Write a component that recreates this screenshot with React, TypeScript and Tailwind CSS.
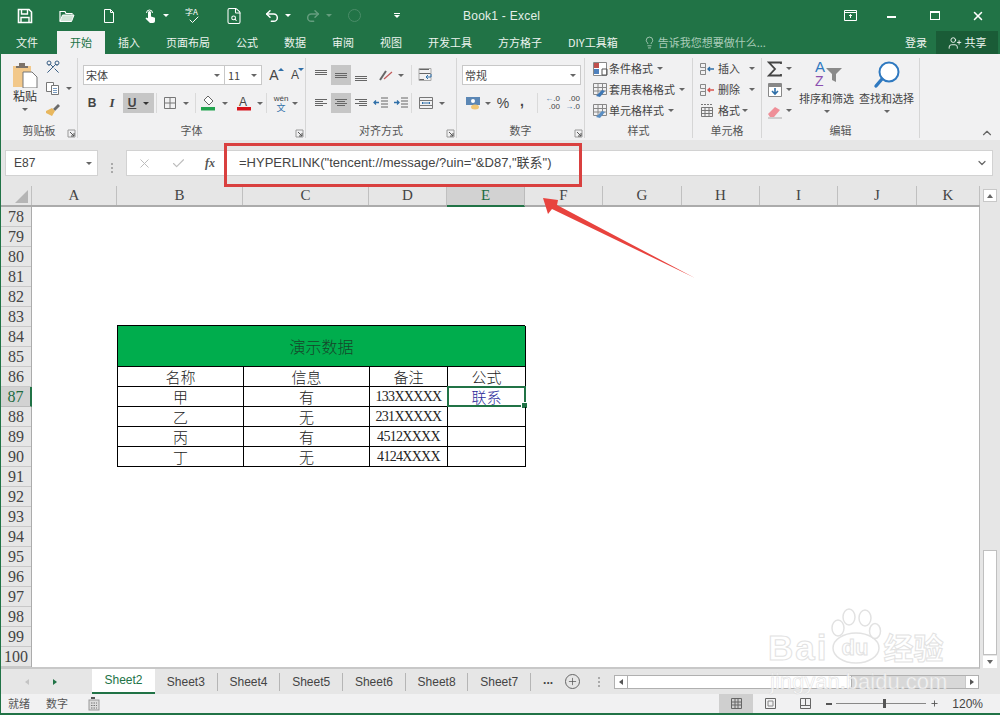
import React from "react";
import { Scissors, FileSearch, Undo2, Redo2, Lightbulb, UserPlus, ChevronDown, ChevronUp, X, Check, Plus } from "lucide-react";

const UI = "font-['Liberation_Sans','Noto_Sans_CJK_SC',sans-serif]";
const CJK = "font-['Noto_Sans_CJK_SC','Liberation_Sans',sans-serif]";

const S = ({ w = 16, h = 16, children }: { w?: number; h?: number; children: React.ReactNode }) => (
  <svg width={w} height={h} viewBox={`0 0 ${w} ${h}`} className="block shrink-0" fill="none">
    {children}
  </svg>
);

const Caret = ({ dark, white }: { dark?: boolean; white?: boolean }) => (
  <span className={"block w-0 h-0 border-x-[3px] border-x-transparent border-t-[3px] shrink-0 " + (white ? "border-t-white" : dark ? "border-t-[#333]" : "border-t-[#666]")} />
);

const Lines = ({ rows, c = "#666" }: { rows: number[][]; c?: string }) => (
  <S>
    {rows.map((r, i) => (
      <line key={i} x1={r[0]} x2={r[1]} y1={r[2] + 0.5} y2={r[2] + 0.5} stroke={c} />
    ))}
  </S>
);

const Launcher = () => (
  <span className="absolute right-[1px] top-[6px]">
    <S w={9} h={9}>
      <path d="M1 8V1h7v7z" stroke="#999" />
      <path d="M3 3l4 4M7 4v3H4" stroke="#555" />
    </S>
  </span>
);

const Group = ({ w, label, launcher, children }: { w: string; label?: string; launcher?: boolean; children: React.ReactNode }) => (
  <div className={"flex flex-col shrink-0 mt-[4px] mb-[2px] border-r border-[#d6d6d6] " + w}>
    <div className="flex-1 min-h-0">{children}</div>
    <div className="relative h-[15px] flex items-center justify-center text-[11px] leading-none text-[#555]">
      {label}
      {launcher && <Launcher />}
    </div>
  </div>
);

const Cell = ({ w, on, children }: { w: string; on?: boolean; children: React.ReactNode }) => (
  <div className={"h-[20px] flex items-center justify-center gap-[4px] shrink-0 " + w + (on ? " bg-[#c6c6c6]" : "")}>{children}</div>
);

const Sep = () => <span className="block w-px h-[20px] bg-[#dadada] shrink-0" />;

const StyleRow = ({ icon, text }: { icon: React.ReactNode; text: string }) => (
  <div className="h-[21px] flex items-center text-[11px] text-[#444] whitespace-nowrap">
    <span className="w-[16px] mr-[1px] flex justify-center shrink-0">{icon}</span>
    {text}
    <span className="ml-[4px]"><Caret /></span>
  </div>
);

const GridIcon = ({ accent }: { accent: string }) => (
  <S>
    <path d="M1.5 1.5h13v11h-13zM1.5 5.5h13M1.5 9h13M6 1.5v11M10.5 1.5v11" stroke="#888" />
    <path d="M4 14l6-6 3 1-5 6z" fill={accent} />
  </S>
);

function Ribbon() {
  return (
    <div className="h-[86px] flex bg-[#f1f1f2] text-[#444]">
      {/* clipboard */}
      <Group w="w-[77px]" label="剪贴板" launcher>
        <div className="flex h-[64px]">
          <div className="w-[37px] pl-[11px] pt-[4px] flex flex-col items-center shrink-0">
            <S w={27} h={26}>
              <path d="M1 4h18v21H1z" fill="#f2c88a" />
              <path d="M7 1h6v3h3v2H4V4h3z" fill="#7c7268" />
              <path d="M11 10h9l5 5v11H11z" fill="#fff" stroke="#777" />
            </S>
            <span className="text-[12px] leading-[14px] mt-[1px] text-[#333] whitespace-nowrap">粘贴</span>
            <span className="mt-[5px]"><Caret /></span>
          </div>
          <div className="pl-[7px] flex flex-col pt-[1px] gap-[5px]">
            <Scissors size={16} strokeWidth={1.5} color="#3a5f85" className="-scale-x-100 -rotate-90" />
            <div className="flex items-center gap-[5px]">
              <S>
                <path d="M1.5 2.5h7v9h-7z" fill="#fff" stroke="#777" />
                <path d="M6.5 5.5h7v9h-7z" fill="#fff" stroke="#777" />
                <path d="M8 8.5h4M8 10.5h4M8 12.5h4" stroke="#7a9cc0" />
              </S>
              <Caret />
            </div>
            <S>
              <path d="M8 8l5-5 2 2-5 5z" fill="#6b6b6b" />
              <path d="M1 10l6-3 3 3-3 5-6-3z" fill="#e8b75e" />
            </S>
          </div>
        </div>
      </Group>

      {/* font */}
      <Group w="w-[228px]" label="字体" launcher>
        <div className="pt-[7px] pl-[5px] flex h-[27px]">
          <div className="w-[142px] h-[20px] bg-white border border-[#c8c8c8] flex items-center justify-between pl-[2px] pr-[4px] text-[11px] text-[#444]">
            宋体 <Caret />
          </div>
          <div className="w-[37px] h-[20px] bg-white border border-l-0 border-[#c8c8c8] flex items-center justify-between pl-[3px] pr-[4px] text-[11px] text-[#444]">
            11 <Caret />
          </div>
          <div className="w-[22px] h-[20px] flex items-center justify-center relative ml-[1px] text-[14px] font-['Liberation_Sans',sans-serif]">
            A<span className="absolute right-[1px] top-[3px] w-0 h-0 border-x-[3px] border-x-transparent border-b-[3px] border-b-[#2f6fa8]" />
          </div>
          <div className="w-[20px] h-[20px] flex items-center justify-center relative text-[12px] font-['Liberation_Sans',sans-serif]">
            A<span className="absolute right-[1px] top-[3px] w-0 h-0 border-x-[3px] border-x-transparent border-t-[3px] border-t-[#2f6fa8]" />
          </div>
        </div>
        <div className="mt-[1px] pt-[7px] pl-[5px] flex items-center">
          <Cell w="w-[18px]"><b className="text-[12px] font-['Liberation_Sans',sans-serif]">B</b></Cell>
          <Cell w="w-[22px]"><i className="text-[13px] font-['Liberation_Serif',serif] font-bold">I</i></Cell>
          <Cell w="w-[31px] gap-[7px]" on><u className="text-[12px] font-bold font-['Liberation_Sans',sans-serif]">U</u><Caret dark /></Cell>
          <div className="w-[3px]" />
          <Sep />
          <Cell w="w-[38px] gap-[6px]">
            <S w={14} h={14}><path d="M1.5 1.5h11v11h-11zM7 1.5v11M1.5 7h11" stroke="#777" /></S>
            <Caret />
          </Cell>
          <Sep />
          <Cell w="w-[37px] gap-[6px]">
            <S>
              <path d="M8 1l5 5-4 4-5-5z" fill="#fff" stroke="#666" />
              <rect x="1" y="12" width="14" height="3.5" fill="#22a34f" />
            </S>
            <Caret />
          </Cell>
          <Cell w="w-[33px] gap-[5px]">
            <S>
              <text x="3" y="11" fontSize="12" fontFamily="Liberation Sans" fill="#444">A</text>
              <rect x="1" y="12" width="14" height="3.5" fill="#d8141c" />
            </S>
            <Caret />
          </Cell>
          <div className="w-[1px]" />
          <Sep />
          <Cell w="w-[38px] gap-[3px]">
            <div className="flex flex-col items-center leading-none">
              <span className="text-[8px] leading-[8px] font-['Liberation_Sans',sans-serif]">wén</span>
              <span className="text-[9px] leading-[9px] text-[#2f6fa8]">文</span>
            </div>
            <Caret />
          </Cell>
        </div>
      </Group>

      {/* align */}
      <Group w="w-[151px]" label="对齐方式" launcher>
        <div className="pt-[7px] pl-[4px] flex h-[27px]">
          <Cell w="w-[21px]"><Lines rows={[[2, 14, 3], [2, 14, 5], [2, 14, 7]]} /></Cell>
          <Cell w="w-[20px]" on><Lines rows={[[2, 14, 6], [2, 14, 8], [2, 14, 10]]} /></Cell>
          <Cell w="w-[20px]"><Lines rows={[[2, 14, 9], [2, 14, 11], [2, 14, 13]]} /></Cell>
          <Cell w="w-[40px] gap-[3px]">
            <S>
              <path d="M2 13L8 4" stroke="#666" strokeWidth="2" />
              <path d="M6 12L14 5" stroke="#c05a5a" strokeWidth="1.2" />
            </S>
            <Caret />
          </Cell>
          <Sep />
          <Cell w="w-[26px]">
            <S>
              <path d="M2 2.5h10M2 6.5h12M2 12.5h5" stroke="#666" />
              <path d="M2 1.5h12v12H2z" stroke="#aaa" />
              <path d="M14 7v3H9m2-2l-2 2 2 2" stroke="#2f6fa8" />
            </S>
          </Cell>
        </div>
        <div className="mt-[1px] pt-[7px] pl-[4px] flex">
          <Cell w="w-[21px]"><Lines rows={[[2, 14, 4], [2, 10, 6], [2, 14, 8], [2, 10, 10]]} /></Cell>
          <Cell w="w-[20px]" on><Lines rows={[[2, 14, 4], [4, 12, 6], [2, 14, 8], [4, 12, 10]]} /></Cell>
          <Cell w="w-[20px]"><Lines rows={[[2, 14, 4], [6, 14, 6], [2, 14, 8], [6, 14, 10]]} /></Cell>
          <Cell w="w-[20px]">
            <S>
              <path d="M8 3h7M8 6h7M8 9h7M8 12h7" stroke="#666" />
              <path d="M6 7.5H1m2-2l-2 2 2 2" stroke="#2f6fa8" strokeWidth="1.3" />
            </S>
          </Cell>
          <Cell w="w-[20px]">
            <S>
              <path d="M8 3h7M8 6h7M8 9h7M8 12h7" stroke="#666" />
              <path d="M1 7.5h5m-2-2l2 2-2 2" stroke="#2f6fa8" strokeWidth="1.3" />
            </S>
          </Cell>
          <Sep />
          <Cell w="w-[38px] gap-[5px]">
            <S>
              <path d="M1.5 2.5h13v11h-13zM1.5 5.5h13M1.5 10.5h13" stroke="#777" />
              <path d="M4 8h8M5 7l-1 1 1 1M11 7l1 1-1 1" stroke="#2f6fa8" />
            </S>
            <Caret />
          </Cell>
        </div>
      </Group>

      {/* number */}
      <Group w="w-[128px]" label="数字" launcher>
        <div className="pt-[7px] pl-[5px] h-[27px]">
          <div className="w-[119px] h-[20px] bg-white border border-[#c8c8c8] flex items-center justify-between pl-[2px] pr-[4px] text-[11px] text-[#444]">
            常规 <Caret />
          </div>
        </div>
        <div className="mt-[1px] pt-[7px] pl-[6px] flex items-center">
          <Cell w="w-[30px] gap-[4px]">
            <S>
              <rect x="1" y="2" width="14" height="8" fill="#5b87b5" />
              <circle cx="8" cy="6" r="2" fill="#fff" />
              <ellipse cx="10" cy="12" rx="4" ry="2.5" fill="#f0c674" />
            </S>
            <Caret />
          </Cell>
          <Cell w="w-[20px]"><span className="text-[14px] font-['Liberation_Sans',sans-serif]">%</span></Cell>
          <Cell w="w-[18px]"><b className="text-[14px] font-['Liberation_Sans',sans-serif] -mt-[4px]">,</b></Cell>
          <div className="w-[6px]" />
          <Sep />
          <Cell w="w-[29px]">
            <div className="flex flex-col text-[8px] leading-[8px] items-end font-['Liberation_Sans',sans-serif]">
              <span><span className="text-[#2f6fa8]">←</span>.0</span><span>.00</span>
            </div>
          </Cell>
          <Cell w="w-[11px]">
            <div className="flex flex-col text-[8px] leading-[8px] items-end font-['Liberation_Sans',sans-serif]">
              <span>.00</span><span><span className="text-[#2f6fa8]">→</span>.0</span>
            </div>
          </Cell>
        </div>
      </Group>

      {/* styles */}
      <Group w="w-[108px]" label="样式">
        <div className="pl-[7px]">
          <StyleRow icon={<S><path d="M1.5 1.5h13v13h-13z" fill="#fff" stroke="#888" /><rect x="2" y="2" width="5" height="5" fill="#c0504d" /><rect x="2" y="8" width="5" height="5" fill="#4f81bd" /><path d="M10 8h5v6h-5z" stroke="#555" /></S>} text="条件格式" />
          <StyleRow icon={<GridIcon accent="#3f78b5" />} text="套用表格格式" />
          <StyleRow icon={<GridIcon accent="#5b8fc4" />} text="单元格样式" />
        </div>
      </Group>

      {/* cells */}
      <Group w="w-[69px]" label="单元格">
        <div className="pl-[6px]">
          {[
            ["插入", "#2f6fa8"],
            ["删除", "#d9534f"],
          ].map(([t, c]) => (
            <div key={t} className="h-[21px] flex items-center text-[11px] text-[#444]">
              <span className="w-[16px] mr-[3px] shrink-0">
                <S><path d="M1.5 2.5h5v4h-5zM1.5 9.5h5v4h-5zM6.5 2.5v11" stroke="#888" /><path d="M9 8h6M11 6l-2 2 2 2" stroke={c} strokeWidth="1.4" /></S>
              </span>
              <span className="w-[26px]">{t}</span>
              <span className="ml-[5px]"><Caret /></span>
            </div>
          ))}
          <div className="h-[21px] flex items-center text-[11px] text-[#444]">
            <span className="w-[16px] mr-[3px] shrink-0">
              <S><path d="M2.5 4.5h11v9h-11zM2.5 7.5h11M2.5 10.5h11M6 4.5v9M10 4.5v9" stroke="#777" /><path d="M2 1.5h12" stroke="#777" strokeDasharray="2 1" /></S>
            </span>
            格式<span className="ml-[2px]"><Caret /></span>
          </div>
        </div>
      </Group>

      {/* editing */}
      <Group w="w-[158px]" label="编辑">
        <div className="flex">
          <div className="pl-[5px] w-[37px] shrink-0">
            <div className="h-[21px] flex items-center gap-[3px]">
              <span className="w-[16px] flex justify-center"><S><path d="M14 3V1.5H2L8 8l-6 6.5h12V13" stroke="#444" strokeWidth="1.8" /></S></span>
              <Caret />
            </div>
            <div className="h-[21px] flex items-center gap-[3px]">
              <span className="w-[16px] flex justify-center"><S><path d="M1.5 1.5h13v13h-13z" fill="#fff" stroke="#888" /><rect x="2" y="2" width="12" height="3" fill="#888" /><path d="M8 6v6M5 9l3 3 3-3" stroke="#2f6fa8" strokeWidth="1.6" /></S></span>
              <Caret />
            </div>
            <div className="h-[21px] flex items-center gap-[3px]">
              <span className="w-[16px] flex justify-center"><S><path d="M1 11l7-7 5 3-6 7H3z" fill="#ef8f98" /><path d="M1 15h14" stroke="#aaa" /></S></span>
              <Caret />
            </div>
          </div>
          <div className="w-[55px] flex flex-col items-center shrink-0">
            <div className="relative h-[33px] w-[30px] ml-[1px]">
              <span className="absolute left-[3px] top-[2px] text-[15px] leading-[14px] text-[#2f79c0] font-['Liberation_Sans',sans-serif]">A</span>
              <span className="absolute left-[3px] top-[16px] text-[14px] leading-[14px] text-[#8b4fb0] font-['Liberation_Sans',sans-serif]">Z</span>
              <span className="absolute left-[14px] top-[9px]">
                <S w={17} h={16}><path d="M0 1h16l-6 6v8l-4-2V7z" fill="#8a8a8a" /></S>
              </span>
            </div>
            <span className="text-[11px] leading-[14px] whitespace-nowrap">排序和筛选</span>
            <span className="mt-[5px]"><Caret /></span>
          </div>
          <div className="w-[6px] shrink-0"></div>
          <div className="w-[55px] flex flex-col items-center shrink-0 -ml-[1px]">
            <div className="h-[33px]">
              <S w={30} h={32}>
                <circle cx="17" cy="14" r="9.5" stroke="#2f79c0" strokeWidth="2" fill="#fff" />
                <path d="M10 21l-6 7" stroke="#2f79c0" strokeWidth="3.4" strokeLinecap="round" />
              </S>
            </div>
            <span className="text-[11px] leading-[14px] whitespace-nowrap">查找和选择</span>
            <span className="mt-[5px]"><Caret /></span>
          </div>
        </div>
      </Group>

      <div className="flex-1 flex justify-end items-end pb-[0px] pr-[6px]">
        <ChevronUp size={14} strokeWidth={2} color="#666" />
      </div>
    </div>
  );
}

const COLS: [string, string][] = [
  ["A", "w-[85px]"],
  ["B", "w-[126px]"],
  ["C", "w-[126px]"],
  ["D", "w-[78px]"],
  ["E", "w-[78px]"],
  ["F", "w-[78px]"],
  ["G", "w-[79px]"],
  ["H", "w-[78px]"],
  ["I", "w-[78px]"],
  ["J", "w-[79px]"],
  ["K", "w-[63px]"],
];

const ROWS = Array.from({ length: 23 }, (_, i) => 78 + i);
const cellBox = "border-r border-b border-black flex items-center justify-center leading-none font-light " + CJK;
const cellBase = cellBox + " text-[15px] text-[#222]";
const numCell = "border-r border-b border-black flex items-center justify-center text-[14px] tracking-[-0.7px] leading-none text-[#222] font-['Liberation_Serif',serif]";

function Sheet() {
  const rows = [
    ["甲", "有", "133XXXXX"],
    ["乙", "无", "231XXXXX"],
    ["丙", "有", "4512XXXX"],
    ["丁", "无", "4124XXXX"],
  ];
  return (
    <div className="flex flex-1 min-h-0">
      <div className="flex flex-col w-[979px]">
        <div className="h-[21px] flex bg-[#e6e6e6] border-b-2 border-[#ababab] shrink-0">
          <div className="w-[31px] border-r border-[#c0c0c0] relative">
            <span className="absolute right-[3px] bottom-[2px] w-0 h-0 border-l-[13px] border-l-transparent border-b-[13px] border-b-[#b5b5b5]" />
          </div>
          {COLS.map(([c, w]) => (
            <div
              key={c}
              className={
                "flex items-center justify-center text-[15px] leading-none font-['Liberation_Serif',serif] " +
                w +
                (c === "E" ? " bg-[#d2d2d2] border-b-2 border-[#217346] -mb-[2px] border-r border-r-[#bbb] text-[#1d6b3f]" : " border-r border-[#c0c0c0] text-[#444]")
              }
            >
              {c}
            </div>
          ))}
        </div>
        <div className="flex flex-1 min-h-0 overflow-hidden border-b-2 border-[#c8c8c8] border-r border-r-[#b5b5b5]">
          <div className="w-[31px] shrink-0 flex flex-col bg-[#e6e6e6] border-r border-[#ababab]">
            {ROWS.map((r) => (
              <div
                key={r}
                className={
                  "h-[20px] shrink-0 flex items-center justify-center text-[16px] leading-none font-['Liberation_Serif',serif] border-b " +
                  (r === 87 ? "bg-[#d2d2d2] text-[#1d6b3f] border-[#bbb] border-r-2 border-r-[#217346] -mr-px" : "border-[#c8c8c8] text-[#444]")
                }
              >
                {r}
              </div>
            ))}
          </div>
          <div className="flex-1 bg-white pt-[118px] pl-[85px]">
            <div className="grid grid-cols-[126px_126px_78px_78px] grid-rows-[41px_20px_20px_20px_20px_20px] w-[408px] border-l border-t border-black">
              <div className={"col-span-4 bg-[#00ad4d] text-[16px] text-[#17452a] " + cellBox}>演示数据</div>
              {["名称", "信息", "备注", "公式"].map((t) => (
                <div key={t} className={cellBase}>{t}</div>
              ))}
              {rows.map((r, i) => (
                <React.Fragment key={i}>
                  <div className={cellBase}>{r[0]}</div>
                  <div className={cellBase}>{r[1]}</div>
                  <div className={numCell}>{r[2]}</div>
                  <div className={"relative text-[15px] text-[#2a2a9a] " + cellBox}>
                    {i === 0 ? "联系" : ""}
                    {i === 0 && (
                      <>
                        <span className="absolute -left-px -top-px -right-px -bottom-px border-2 border-[#217346]" />
                        <span className="absolute -right-[3px] -bottom-[3px] w-[5px] h-[5px] bg-[#217346] border border-white box-content" />
                      </>
                    )}
                  </div>
                </React.Fragment>
              ))}
            </div>
          </div>
        </div>
      </div>
      <div className="w-[20px] bg-[#e6e6e6] flex flex-col items-center shrink-0 pt-[3px]">
        <div className="w-[14px] h-[13px] bg-white border border-[#c8c8c8] flex items-center justify-center">
          <span className="w-0 h-0 border-x-[3px] border-x-transparent border-b-[4px] border-b-[#666]" />
        </div>
        <div className="flex-1" />
        <div className="w-[14px] h-[105px] bg-white border border-[#c0c0c0]" />
        <div className="w-[14px] h-[12px] bg-white flex items-center justify-center mt-[1px] mb-[1px]">
          <span className="w-0 h-0 border-x-[3px] border-x-transparent border-t-[4px] border-t-[#666]" />
        </div>
      </div>
    </div>
  );
}

function SheetTabs() {
  return (
    <div className={"h-[25px] flex items-center bg-[#e6e6e6] text-[12px] text-[#444] shrink-0 " + UI}>
      <div className="w-[91px] flex items-center shrink-0 pl-[24px] gap-[24px]">
        <span className="w-0 h-0 border-y-[3px] border-y-transparent border-r-[4px] border-r-[#c4c4c4]" />
        <span className="w-0 h-0 border-y-[3px] border-y-transparent border-l-[4px] border-l-[#217346]" />
      </div>
      <div className="w-[63px] h-[25px] -mt-[1px] bg-white border-b-2 border-[#217346] flex items-center justify-center text-[#217346] shrink-0">Sheet2</div>
      {["Sheet3", "Sheet4", "Sheet5", "Sheet6", "Sheet8", "Sheet7"].map((s) => (
        <div key={s} className="w-[62.7px] h-[18px] border-r border-[#b5b5b5] flex items-center justify-center shrink-0">{s}</div>
      ))}
      <span className="w-[18px] ml-[8px] font-bold shrink-0 text-center -mt-[3px]">...</span>
      <span className="ml-[8px] w-[15px] h-[15px] rounded-full border border-[#666] flex items-center justify-center shrink-0">
        <Plus size={11} strokeWidth={1.6} color="#555" />
      </span>
      <span className="ml-[18px] w-[2px] h-[10px] border-l-2 border-dotted border-[#aaa] shrink-0" />
      <div className="ml-[14px] w-[365px] h-[14px] flex items-stretch bg-[#d8d8d8] border border-[#b0b0b0]">
        <div className="w-[13px] bg-white border-r border-[#b0b0b0] flex items-center justify-center shrink-0">
          <span className="w-0 h-0 border-y-[3px] border-y-transparent border-r-[4px] border-r-[#555]" />
        </div>
        <div className="w-[224px] bg-white border-r border-[#b0b0b0] shrink-0" />
        <div className="flex-1" />
        <div className="w-[13px] bg-white border-l border-[#c8c8c8] flex items-center justify-center shrink-0">
          <span className="w-0 h-0 border-y-[3px] border-y-transparent border-l-[4px] border-l-[#555]" />
        </div>
      </div>
    </div>
  );
}

function StatusBar() {
  return (
    <div className="h-[19px] flex items-center bg-[#f1f1f2] text-[11px] text-[#555] shrink-0">
      <span className="ml-[7px] w-[38px]">就绪</span>
      <span className="w-[42px]">数字</span>
      <S w={12} h={14}>
        <rect x="1" y="3" width="10" height="10" fill="#ddd" stroke="#999" />
        <path d="M3 1h4" stroke="#555" strokeWidth="2" />
        <path d="M3 6h6M3 8.5h6M3 11h6" stroke="#777" strokeDasharray="1.5 1" />
      </S>
      <div className="flex-1" />
      <div className="w-[34px] h-[19px] bg-[#cfcfcf] flex items-center justify-center shrink-0">
        <S w={13} h={13}><path d="M1.5 1.5h10v10h-10zM1.5 5h10M1.5 8h10M5 1.5v10M8 1.5v10" stroke="#666" /></S>
      </div>
      <div className="w-[35px] flex justify-center shrink-0">
        <S w={13} h={13}><path d="M1.5 1.5h10v10h-10z" stroke="#666" /><path d="M4 4h5v5H4z" stroke="#888" /></S>
      </div>
      <div className="w-[35px] flex justify-center shrink-0">
        <S w={13} h={13}><path d="M1.5 1.5h10v10h-10zM1.5 8.5h10M6.5 1.5v7" stroke="#666" /></S>
      </div>
      <span className="ml-[3px] w-[6px] h-[2px] bg-[#555] shrink-0" />
      <div className="ml-[4px] w-[90px] h-[1px] bg-[#888] relative shrink-0">
        <span className="absolute left-[47px] -top-[4px] w-[3px] h-[9px] bg-[#555]" />
      </div>
      <span className="ml-[4px]"><Plus size={9} strokeWidth={2.4} color="#555" /></span>
      <span className={"ml-[13px] mr-[17px] text-[12px] text-[#444] " + UI}>120%</span>
    </div>
  );
}

export default function App() {
  return (
    <div className={"relative w-[1000px] h-[715px] overflow-hidden flex flex-col bg-[#e6e6e6] " + CJK}>
      {/* title bar */}
      <div className="h-[31px] bg-[#217346] flex items-center text-white shrink-0 relative">
        <div className="flex items-center h-[28px]">
          <span className="ml-[17px]">
            <S>
              <path d="M1.5 1.5h10.5l2.5 2.5v10.5h-13z" stroke="#fff" strokeWidth="1.6" />
              <path d="M4.5 2v4h6V2M4 14.5v-5h8v5" stroke="#fff" strokeWidth="1.4" />
            </S>
          </span>
          <span className="ml-[26px]">
            <S>
              <path d="M1 13.5V3.5h5l1 2h6v1" stroke="#fff" strokeWidth="1.2" />
              <path d="M1 13.5l2.5-6.5H15l-2.5 6.5z" fill="#cfe3d7" stroke="#fff" />
            </S>
          </span>
          <span className="ml-[26px]">
            <S><path d="M3.5 1.5h6l3 3v10h-9zM9.5 1.5v3h3" stroke="#fff" /></S>
          </span>
          <span className="ml-[25px]">
            <S>
              <path d="M4.5 5a3 3 0 016 0" stroke="#fff" />
              <path d="M6 4.5a1.5 1.5 0 013 0v4l4 1.2v3.3c0 1.2-.8 2-2 2H8L3.5 10.5l1-1 1.5.8z" fill="#fff" />
            </S>
          </span>
          <span className="ml-[5px]"><Caret white /></span>
          <span className="ml-[16px] relative w-[18px] h-[18px] block">
            <span className="absolute left-0 top-0 text-[8px] leading-[9px]">字A</span>
            <Check size={12} strokeWidth={2} color="#fff" className="absolute left-[3px] top-[7px]" />
          </span>
          <span className="ml-[22px]"><FileSearch size={18} color="#fff" strokeWidth={1.4} /></span>
          <span className="ml-[21px]"><Undo2 size={16} color="#fff" strokeWidth={2.2} /></span>
          <span className="ml-[5px]"><Caret white /></span>
          <span className="ml-[14px] opacity-30"><Redo2 size={16} color="#fff" strokeWidth={2.2} /></span>
          <span className="ml-[5px] opacity-30"><Caret white /></span>
          <span className="ml-[16px] w-[13px] h-[13px] rounded-full border border-[#4a8c68]" />
          <span className="ml-[33px] flex flex-col items-center gap-[1px]">
            <span className="w-[6px] h-px bg-white" />
            <span className="w-0 h-0 border-x-[3px] border-x-transparent border-t-[3px] border-t-white" />
          </span>
        </div>
        <span className={"absolute left-[463px] top-[9px] text-[12px] leading-[14px] tracking-[0.25px] text-[#e4efe8] " + UI}>Book1 - Excel</span>
        <div className="ml-auto flex items-center h-[28px]">
          <span className="mr-[30px]">
            <S w={13} h={11}>
              <path d="M.5.5h12v10H.5zM.5 2.5h12" stroke="#fff" />
              <path d="M6.5 8V4.5M5 6l1.5-1.5L8 6" stroke="#fff" />
            </S>
          </span>
          <span className="w-[9px] h-[2px] bg-white mr-[34px] mt-[3px]" />
          <span className="w-[10px] h-[9px] border border-white border-t-2 mr-[31px]" />
          <X size={14} strokeWidth={2.6} color="#fff" className="mr-[15px]" />
        </div>
      </div>

      {/* tabs */}
      <div className="h-[23px] bg-[#217346] flex items-stretch pl-[3px] text-[11px] leading-none text-[#edf4ef] shrink-0">
        <div className="px-[13px] flex items-center mr-[6px]">文件</div>
        <div className="px-[13px] flex items-center bg-[#f1f1f2] text-[#217346]">开始</div>
        {["插入", "页面布局", "公式", "数据", "审阅", "视图", "开发工具", "方方格子", "DIY工具箱"].map((t) => (
          <div key={t} className="px-[13px] flex items-center whitespace-nowrap">{t}</div>
        ))}
        <div className="ml-[12px] flex items-center text-[#a9ccb8] whitespace-nowrap">
          <Lightbulb size={13} strokeWidth={1.3} color="#cfe3d7" className="mr-[2px]" />
          告诉我您想要做什么...
        </div>
        <div className="ml-auto flex items-center mr-[9px] whitespace-nowrap">登录</div>
        <div className="w-[62px] mr-[2px] bg-[#1a5c37] flex items-center justify-center gap-[3px] whitespace-nowrap">
          <UserPlus size={14} strokeWidth={1.5} color="#fff" />
          共享
        </div>
      </div>

      {/* body */}
      <div className="flex-1 min-h-0 flex flex-col border-l border-[#217346] border-b-2 border-b-[#217346]">
        <Ribbon />
        {/* formula bar */}
        <div className="h-[46px] pt-[10px] flex bg-[#e6e6e6] shrink-0">
          <div className={"ml-[4px] w-[93px] h-[26px] bg-white border border-[#d2d2d2] flex items-center justify-between pl-[8px] pr-[5px] text-[12px] text-[#444] " + UI}>
            E87 <Caret />
          </div>
          <div className="w-[28px] flex flex-col items-center justify-center gap-[2px]">
            <span className="w-[2px] h-[2px] bg-[#aaa]" />
            <span className="w-[2px] h-[2px] bg-[#aaa]" />
            <span className="w-[2px] h-[2px] bg-[#aaa]" />
          </div>
          <div className="w-[100px] h-[26px] bg-white border border-[#d2d2d2] border-r-0 flex items-center pl-[10px]">
            <X size={15} strokeWidth={1.6} color="#bdbdbd" />
            <Check size={15} strokeWidth={1.8} color="#bdbdbd" className="ml-[19px]" />
            <i className="ml-[19px] text-[12px] font-['Liberation_Serif',serif] font-bold text-[#555]">fx</i>
          </div>
          <div className={"w-[767px] h-[26px] bg-white border border-[#d2d2d2] flex items-center justify-between pl-[12px] pr-[4px] text-[13px] text-[#444] whitespace-nowrap " + UI}>
            {'=HYPERLINK("tencent://message/?uin="&D87,"联系")'}
            <ChevronDown size={12} strokeWidth={2.4} color="#666" />
          </div>
        </div>
        <Sheet />
        <SheetTabs />
        <StatusBar />
      </div>

      {/* annotation: red box + arrow over the picture */}
      <div className="absolute left-[224px] top-[143px] w-[358px] h-[44px] border-[3px] border-[#d9403f]" />
      <svg className="absolute left-0 top-0 pointer-events-none" width="1000" height="715" viewBox="0 0 1000 715" fill="none">
        <polygon points="543,198 558,200 557,205 695,278 552,209 548,214" fill="#e8433e" />
      </svg>

      {/* watermark */}
      <div className="absolute left-[768px] top-[608px] h-[60px] flex items-end text-white [-webkit-text-stroke:1px_#e2e2e2] pointer-events-none">
        <span className="text-[35px] leading-[40px] font-['Liberation_Sans',sans-serif] font-bold tracking-[2px]">Bai</span>
        <span className="relative w-[52px] h-[60px] ml-[2px]">
          <S w={52} h={60}>
            <ellipse cx="26" cy="40" rx="23" ry="15" stroke="#e2e2e2" strokeWidth="1.5" fill="#fff" />
            <ellipse cx="8" cy="20" rx="6" ry="8" stroke="#e2e2e2" strokeWidth="1.5" fill="#fff" />
            <ellipse cx="19" cy="9" rx="6" ry="8" stroke="#e2e2e2" strokeWidth="1.5" fill="#fff" />
            <ellipse cx="35" cy="10" rx="6" ry="8" stroke="#e2e2e2" strokeWidth="1.5" fill="#fff" />
            <ellipse cx="45" cy="23" rx="5.5" ry="7.5" stroke="#e2e2e2" strokeWidth="1.5" fill="#fff" />
          </S>
          <span className="absolute left-[11px] top-[28px] text-[22px] leading-[24px] font-['Liberation_Sans',sans-serif] font-bold">du</span>
        </span>
        <span className={"text-[30px] leading-[30px] font-bold mb-[7px] ml-[1px] " + CJK}>经验</span>
      </div>
      <div className="absolute left-[770px] top-[668px] text-[22px] leading-[28px] text-white/75 [-webkit-text-stroke:0.5px_#dcdcdc] font-['Liberation_Sans',sans-serif] whitespace-nowrap pointer-events-none">
        jingyan.baidu.com
      </div>
    </div>
  );
}
